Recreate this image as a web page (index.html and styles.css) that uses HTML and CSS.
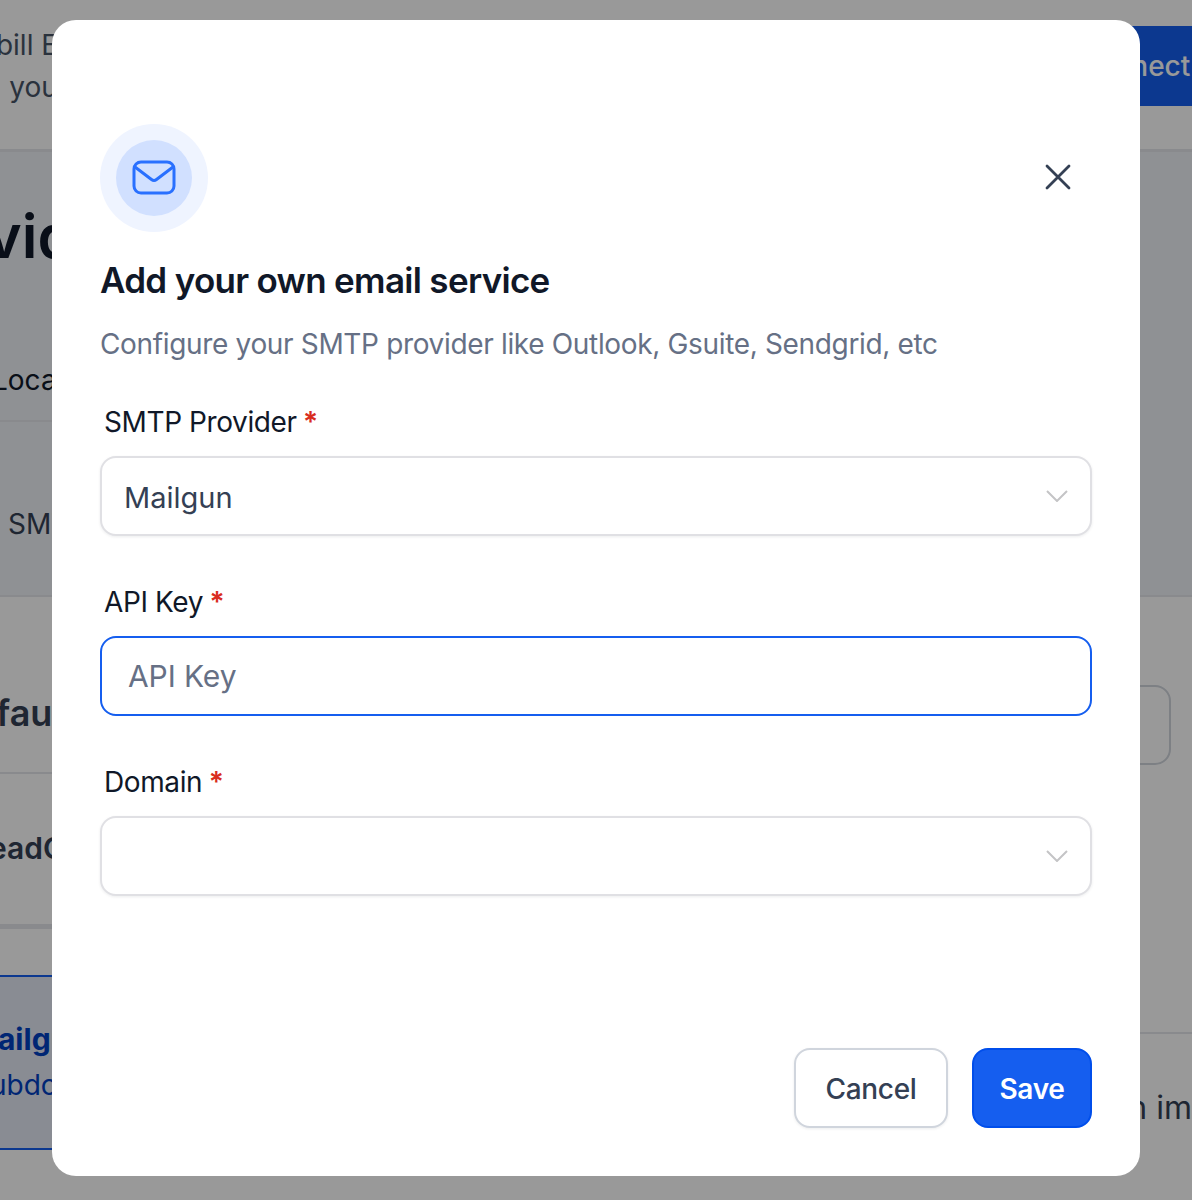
FILE: index.html
```html
<!DOCTYPE html>
<html lang="en">
<head>
    <meta charset="UTF-8">
    <meta name="viewport" content="width=device-width, initial-scale=1.0">
    <title>Add your own email service</title>
    <link rel="stylesheet" href="styles.css">
</head>
<body>
    <div class="page">
        <div class="banner">
            <div class="banner-text">
                <div>Rebill Emails</div>
                <div class="banner-line-two">on your</div>
            </div>
            <button class="connect-btn">Connect</button>
        </div>

        <div class="providers">
            <div class="providers-title">Provider</div>
            <div class="providers-tab">Local</div>
            <div class="providers-row">SMTP</div>
        </div>

        <div class="defaults">
            <div class="defaults-head">
                <span class="defaults-title">Default</span>
                <div class="defaults-select"></div>
            </div>
            <div class="defaults-row">LeadConnector</div>
        </div>

        <div class="mail-row">
            <div class="mail-card">
                <div class="mail-name">Mailgun</div>
                <div class="mail-sub">Subdomain</div>
            </div>
            <div class="mail-side">
                <div class="mail-side-head"></div>
                <div class="mail-side-text">an im</div>
            </div>
        </div>
    </div>

    <div class="overlay">
        <div class="modal">
            <div class="modal-head">
                <div class="icon-ring">
                    <div class="icon-core">
                        <svg class="mail-icon" width="44" height="35" viewBox="0 0 44 35" fill="none" stroke="#2970ff" stroke-width="3" stroke-linecap="round" stroke-linejoin="round">
                            <rect x="2" y="2" width="40" height="31" rx="7"/>
                            <path d="M3 7l16.5 12.5a4 4 0 0 0 5 0L41 7"/>
                        </svg>
                    </div>
                </div>
                <button class="close-btn" aria-label="Close">
                    <svg width="28" height="28" viewBox="0 0 28 28" fill="none" stroke="#344054" stroke-width="2.8" stroke-linecap="round">
                        <path d="M3 3l22 22M25 3L3 25"/>
                    </svg>
                </button>
            </div>

            <h1 class="modal-title">Add your own email service</h1>
            <p class="modal-sub">Configure your SMTP provider like Outlook, Gsuite, Sendgrid, etc</p>

            <div class="field">
                <label class="field-label">SMTP Provider <span class="req">*</span></label>
                <div class="select-box">
                    <span class="select-value">Mailgun</span>
                    <svg class="chevron" width="22" height="12" viewBox="0 0 22 12" fill="none" stroke="#c4c4c6" stroke-width="2">
                        <path d="M1 1l10 10L21 1"/>
                    </svg>
                </div>
            </div>

            <div class="field">
                <label class="field-label">API Key <span class="req">*</span></label>
                <div class="text-box">API Key</div>
            </div>

            <div class="field">
                <label class="field-label">Domain <span class="req">*</span></label>
                <div class="select-box">
                    <span class="select-value"></span>
                    <svg class="chevron" width="22" height="12" viewBox="0 0 22 12" fill="none" stroke="#c4c4c6" stroke-width="2">
                        <path d="M1 1l10 10L21 1"/>
                    </svg>
                </div>
            </div>

            <div class="modal-foot">
                <button class="btn btn-cancel">Cancel</button>
                <button class="btn btn-save">Save</button>
            </div>
        </div>
    </div>
</body>
</html>
```

FILE: styles.css
```css
* {
    box-sizing: border-box;
}
body {
    margin: 0;
    font-family: Inter, "Liberation Sans", sans-serif;
    background-color: white;
    overflow: hidden;
}
.page {
    height: 1200px;
    overflow: hidden;
}

/* page behind the modal */
.banner {
    height: 152px;
    display: flex;
    justify-content: space-between;
    align-items: flex-start;
    border-bottom: 3px solid #e4e7ec;
    padding-top: 24px;
}
.banner-text {
    margin-left: -38px;
    font-size: 28px;
    line-height: 42px;
    color: #475467;
    white-space: nowrap;
}
.banner-line-two {
    margin-left: 6px;
}
.connect-btn {
    width: 200px;
    height: 80px;
    flex: none;
    margin-top: 2px;
    margin-right: -60px;
    padding: 0 0 0 25px;
    background-color: #155eef;
    color: white;
    border: none;
    text-align: left;
    font-family: inherit;
    font-size: 28px;
    font-weight: 500;
    white-space: nowrap;
}
.providers {
    height: 445px;
    background-color: #eef2f7;
    border-bottom: 2px solid #e4e7ec;
}
.providers-title {
    height: 130px;
    margin-left: -110px;
    padding-top: 48px;
    font-size: 60px;
    line-height: 72px;
    font-weight: 600;
    color: #101828;
    white-space: nowrap;
}
.providers-tab {
    width: 600px;
    height: 140px;
    margin-left: -8px;
    padding-top: 78px;
    border-bottom: 2px solid #e4e7ec;
    font-size: 28px;
    line-height: 40px;
    color: #101828;
}
.providers-row {
    padding: 82px 0 0 8px;
    font-size: 28px;
    line-height: 40px;
    color: #344054;
}
.defaults {
    height: 332px;
    background: linear-gradient(#e4e7ec, #e4e7ec) left bottom / 600px 5px no-repeat;
}
.defaults-head {
    height: 177px;
    display: flex;
    justify-content: space-between;
    align-items: flex-start;
    padding: 88px 21px 0 0;
    background: linear-gradient(#e4e7ec, #e4e7ec) left bottom / 600px 2px no-repeat;
}
.defaults-title {
    margin-left: -51px;
    font-size: 36px;
    line-height: 56px;
    font-weight: 600;
    color: #344054;
}
.defaults-select {
    width: 400px;
    height: 80px;
    border: 2px solid #d0d5dd;
    border-radius: 16px;
}
.defaults-row {
    margin-left: -28px;
    padding-top: 50px;
    font-size: 30px;
    line-height: 48px;
    font-weight: 600;
    color: #344054;
}
.mail-row {
    display: flex;
    margin-top: 46px;
}
.mail-card {
    width: 400px;
    height: 175px;
    flex: none;
    margin-left: -150px;
    padding: 42px 0 0 150px;
    background-color: #e4e9f6;
    border-top: 2px solid #155eef;
    border-bottom: 2px solid #155eef;
    color: #0040c1;
    white-space: nowrap;
}
.mail-name {
    margin-left: -30px;
    font-size: 30px;
    line-height: 40px;
    font-weight: 700;
}
.mail-sub {
    margin: 6px 0 0 -28px;
    font-size: 28px;
    line-height: 40px;
}
.mail-side {
    flex: 1;
}
.mail-side-head {
    height: 59px;
    border-bottom: 2px solid #e4e7ec;
}
.mail-side-text {
    padding-top: 54px;
    text-align: right;
    font-size: 32px;
    line-height: 40px;
    color: #344054;
    white-space: nowrap;
}

/* modal */
.overlay {
    position: fixed;
    top: 0;
    left: 0;
    right: 0;
    bottom: 0;
    background-color: rgba(0, 0, 0, 0.4);
}
.modal {
    position: absolute;
    top: 20px;
    left: 52px;
    width: 1088px;
    height: 1156px;
    display: flex;
    flex-direction: column;
    padding: 104px 48px 48px;
    background-color: white;
    border-radius: 24px;
}
.modal-head {
    display: flex;
    justify-content: space-between;
    align-items: center;
}
.icon-ring {
    width: 108px;
    height: 108px;
    display: flex;
    align-items: center;
    justify-content: center;
    border-radius: 50%;
    background-color: #eff4ff;
}
.icon-core {
    width: 76px;
    height: 76px;
    display: flex;
    align-items: center;
    justify-content: center;
    border-radius: 50%;
    background-color: #d1e0ff;
}
.mail-icon {
    margin: -2px 1px 0 0;
}
.close-btn {
    display: flex;
    margin: -2px 20px 0 0;
    padding: 0;
    background: none;
    border: none;
}
.modal-title {
    margin: 24px 0 0;
    font-size: 35px;
    line-height: 48px;
    font-weight: 600;
    letter-spacing: -0.7px;
    color: #101828;
}
.modal-sub {
    margin: 20px 0 0;
    font-size: 28px;
    line-height: 40px;
    letter-spacing: -0.34px;
    color: #667085;
}
.field {
    margin-top: 46px;
}
.modal-sub + .field {
    margin-top: 38px;
}
.field-label {
    display: block;
    height: 40px;
    margin: 0 0 14px 4px;
    font-size: 28px;
    line-height: 40px;
    letter-spacing: -0.4px;
    color: #101828;
}
.req {
    margin-left: -1px;
    font-weight: 600;
    color: #d92d20;
}
.select-box {
    height: 80px;
    display: flex;
    justify-content: space-between;
    align-items: center;
    padding: 0 22px;
    background-color: white;
    border: 2px solid #e0e0e4;
    border-radius: 16px;
    box-shadow: 0 1px 3px rgba(16, 24, 40, 0.08);
}
.select-value {
    padding-top: 2px;
    font-size: 29px;
    color: #344054;
}
.text-box {
    height: 80px;
    display: flex;
    align-items: center;
    padding: 0 26px;
    border: 2px solid #155eef;
    border-radius: 16px;
    font-size: 30px;
    letter-spacing: -0.1px;
    color: #667085;
}
.modal-foot {
    margin-top: auto;
    display: flex;
    justify-content: flex-end;
    gap: 24px;
}
.btn {
    height: 80px;
    padding: 1px 0 0;
    border-radius: 16px;
    font-family: inherit;
    font-size: 28px;
    font-weight: 500;
    letter-spacing: -0.3px;
}
.btn-cancel {
    width: 154px;
    background-color: white;
    border: 2px solid #d0d5dd;
    color: #344054;
    box-shadow: 0 1px 3px rgba(16, 24, 40, 0.08);
}
.btn-save {
    width: 120px;
    background-color: #155eef;
    border: 2px solid #004eeb;
    color: white;
    font-weight: 600;
}
```
